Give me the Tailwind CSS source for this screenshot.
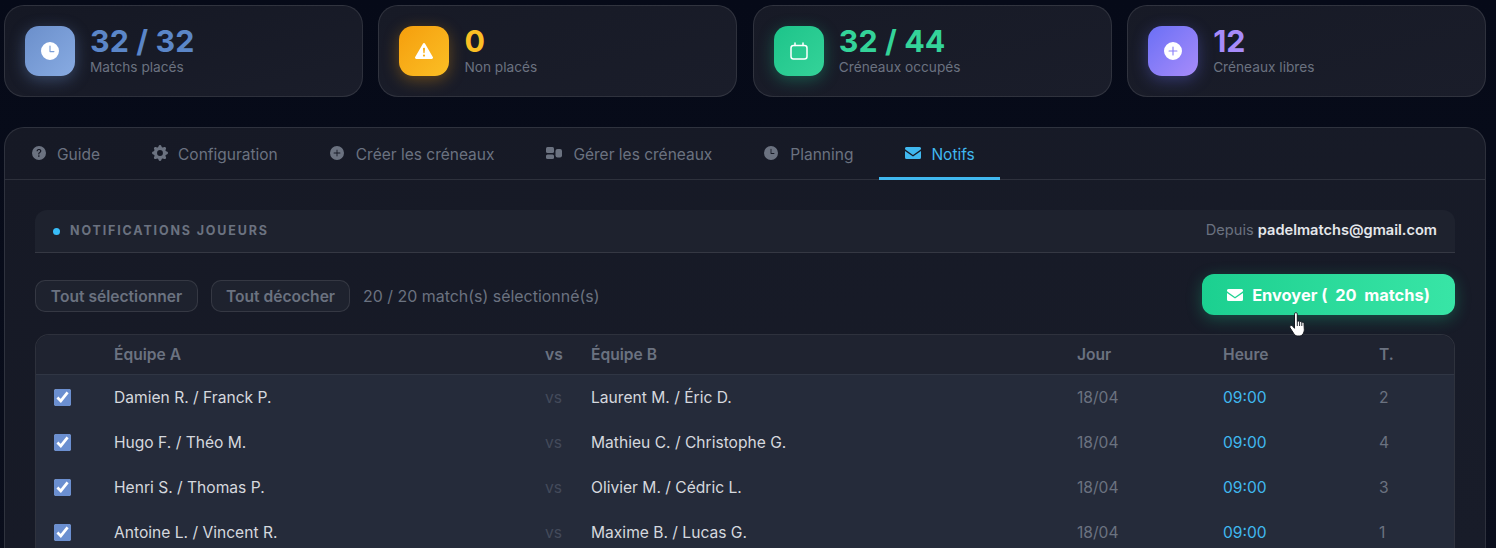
<!DOCTYPE html>
<html lang="fr">
<head>
  <meta charset="UTF-8" />
  <title>Notifications joueurs</title>
  <script src="https://cdn.jsdelivr.net/npm/@tailwindcss/browser@4"></script>
</head>
<body class="h-[548px] overflow-hidden bg-gradient-to-b from-[#060a18] to-[#0a0e1c] font-['Inter',sans-serif] text-[#d5d8de]">
  <div class="pl-[4px] pr-[10px] pt-[5px]">

    <!-- Stats -->
    <div class="grid grid-cols-4 gap-[15.5px]">
      <div class="flex h-[92px] items-center gap-[15px] rounded-[20px] border border-white/10 bg-gradient-to-br from-[#151824] to-[#1a1d2a] px-[20px]">
        <div class="flex h-[50px] w-[50px] items-center justify-center rounded-[14px] bg-gradient-to-br from-[#6b8fcb] to-[#88abe2] shadow-[0_4px_16px_rgba(107,143,203,0.4)]">
          <svg class="h-[18px] w-[18px]" viewBox="0 0 16 16" fill="#fff"><path fill-rule="evenodd" d="M16 8A8 8 0 1 1 0 8a8 8 0 0 1 16 0M8.500 3.500a.5.5 0 0 0-1 0V8.500a.5.5 0 0 0 .5.5h3.500a.5.5 0 0 0 0-1H8.500z"/></svg>
        </div>
        <div class="mt-[-2px]">
          <div class="text-[30.4px] leading-[33px] font-bold tracking-[0.1px] text-[#5b86c8]">32 / 32</div>
          <div class="text-[13.7px] leading-[18px] text-[#6b7280]">Matchs placés</div>
        </div>
      </div>
      <div class="flex h-[92px] items-center gap-[15px] rounded-[20px] border border-white/10 bg-gradient-to-br from-[#171a26] to-[#1a1d2a] px-[20px]">
        <div class="flex h-[50px] w-[50px] items-center justify-center rounded-[14px] bg-gradient-to-br from-[#f59e0b] to-[#fbbf24] shadow-[0_4px_16px_rgba(245,158,11,0.35)]">
          <svg class="h-[18px] w-[18px]" viewBox="0 0 16 16" fill="#fff"><path d="M8.982 1.566a1.13 1.13 0 0 0-1.96 0L.165 13.233c-.457.778.091 1.767.98 1.767h13.713c.889 0 1.438-.99.98-1.767zM8 5c.535 0 .954.462.9.995l-.35 3.507a.552.552 0 0 1-1.1 0L7.100 5.995A.905.905 0 0 1 8 5m.002 6a1 1 0 1 1 0 2 1 1 0 0 1 0-2"/></svg>
        </div>
        <div class="mt-[-2px]">
          <div class="text-[30.4px] leading-[33px] font-bold tracking-[0.1px] text-[#fbbf24]">0</div>
          <div class="text-[13.7px] leading-[18px] text-[#6b7280]">Non placés</div>
        </div>
      </div>
      <div class="flex h-[92px] items-center gap-[15px] rounded-[20px] border border-white/10 bg-gradient-to-br from-[#171a26] to-[#1a1d2a] px-[20px]">
        <div class="flex h-[50px] w-[50px] items-center justify-center rounded-[14px] bg-gradient-to-br from-[#1cc48a] to-[#34d399] shadow-[0_4px_16px_rgba(28,196,138,0.35)]">
          <svg class="h-[18px] w-[18px]" viewBox="0 0 18 18" fill="none" stroke="#fff" stroke-width="1.500" stroke-linecap="round"><rect x="1" y="3.500" width="16" height="13.500" rx="2.500"/><path d="M5 1v2.500M13 1v2.500"/></svg>
        </div>
        <div class="mt-[-2px]">
          <div class="text-[30.4px] leading-[33px] font-bold tracking-[0.1px] text-[#34d399]">32 / 44</div>
          <div class="text-[13.7px] leading-[18px] text-[#6b7280]">Créneaux occupés</div>
        </div>
      </div>
      <div class="flex h-[92px] items-center gap-[15px] rounded-[20px] border border-white/10 bg-gradient-to-br from-[#171a26] to-[#1a1d2a] px-[20px]">
        <div class="flex h-[50px] w-[50px] items-center justify-center rounded-[14px] bg-gradient-to-br from-[#6b6ff5] to-[#a78bfa] shadow-[0_4px_16px_rgba(107,111,245,0.35)]">
          <svg class="h-[18px] w-[18px]" viewBox="0 0 16 16" fill="#fff"><path fill-rule="evenodd" d="M16 8A8 8 0 1 1 0 8a8 8 0 0 1 16 0M8.500 4.500a.5.5 0 0 0-1 0v3h-3a.5.5 0 0 0 0 1h3v3a.5.5 0 0 0 1 0v-3h3a.5.5 0 0 0 0-1h-3z"/></svg>
        </div>
        <div class="mt-[-2px]">
          <div class="text-[30.4px] leading-[33px] font-bold tracking-[0.1px] text-[#a78bfa]">12</div>
          <div class="text-[13.7px] leading-[18px] text-[#6b7280]">Créneaux libres</div>
        </div>
      </div>
    </div>

    <!-- Main panel -->
    <div class="mt-[30px] rounded-t-[20px] border border-white/10 bg-gradient-to-br from-[#161925] to-[#181c29]">

      <!-- Tabs -->
      <div class="flex h-[52px] border-b border-white/10 pl-[1px] pt-[2px] text-[15.5px] text-[#6b7280]">
        <div class="flex items-center gap-[11px] px-[26px]">
          <svg class="mt-[-4px] h-[14px] w-[14px]" viewBox="0 0 16 16" fill="currentColor"><path d="M16 8A8 8 0 1 1 0 8a8 8 0 0 1 16 0M5.496 6.033h.825c.138 0 .248-.113.266-.25.09-.656.54-1.134 1.342-1.134.686 0 1.314.343 1.314 1.168 0 .635-.374.927-.965 1.371-.673.489-1.206 1.06-1.168 1.987l.003.217a.25.25 0 0 0 .25.246h.811a.25.25 0 0 0 .25-.25v-.105c0-.718.273-.927 1.01-1.486.609-.463 1.244-.977 1.244-2.056 0-1.511-1.276-2.241-2.673-2.241-1.267 0-2.655.59-2.75 2.286a.237.237 0 0 0 .241.247m2.325 6.443c.61 0 1.029-.394 1.029-.927 0-.552-.42-.94-1.029-.94-.584 0-1.009.388-1.009.94 0 .533.425.927 1.01.927z"/></svg>
          Guide
        </div>
        <div class="flex items-center gap-[10px] px-[26px]">
          <svg class="mt-[-4px] h-[16px] w-[16px]" viewBox="0 0 16 16" fill="currentColor"><path d="M9.405 1.050c-.413-1.400-2.397-1.400-2.810 0l-.1.340a1.464 1.464 0 0 1-2.105.872l-.31-.17c-1.283-.698-2.686.705-1.987 1.987l.169.311c.446.82.023 1.841-.872 2.105l-.34.1c-1.400.413-1.400 2.397 0 2.810l.34.1a1.464 1.464 0 0 1 .872 2.105l-.17.31c-.698 1.283.705 2.686 1.987 1.987l.311-.169a1.464 1.464 0 0 1 2.105.872l.1.34c.413 1.400 2.397 1.400 2.810 0l.1-.34a1.464 1.464 0 0 1 2.105-.872l.31.17c1.283.698 2.686-.705 1.987-1.987l-.169-.311a1.464 1.464 0 0 1 .872-2.105l.34-.1c1.400-.413 1.400-2.397 0-2.810l-.34-.1a1.464 1.464 0 0 1-.872-2.105l.17-.31c.698-1.283-.705-2.686-1.987-1.987l-.311.169a1.464 1.464 0 0 1-2.105-.872zM8 10.930a2.929 2.929 0 1 1 0-5.860 2.929 2.929 0 0 1 0 5.858z"/></svg>
          Configuration
        </div>
        <div class="flex items-center gap-[12px] px-[26px]">
          <svg class="mt-[-4px] h-[14px] w-[14px]" viewBox="0 0 16 16" fill="currentColor"><path fill-rule="evenodd" d="M16 8A8 8 0 1 1 0 8a8 8 0 0 1 16 0M8.500 4.500a.5.5 0 0 0-1 0v3h-3a.5.5 0 0 0 0 1h3v3a.5.5 0 0 0 1 0v-3h3a.5.5 0 0 0 0-1h-3z"/></svg>
          Créer les créneaux
        </div>
        <div class="flex items-center gap-[11px] px-[26px]">
          <svg class="mt-[-4px] h-[14px] w-[16px]" viewBox="0 0 16 14" fill="currentColor"><rect x="0" y="1" width="8" height="6" rx="1.500"/><rect x="0" y="8.500" width="8" height="4.500" rx="1.500"/><rect x="9.500" y="3" width="6.500" height="8.500" rx="2"/></svg>
          Gérer les créneaux
        </div>
        <div class="flex items-center gap-[12px] px-[26px]">
          <svg class="mt-[-4px] h-[14px] w-[14px]" viewBox="0 0 16 16" fill="currentColor"><path fill-rule="evenodd" d="M16 8A8 8 0 1 1 0 8a8 8 0 0 1 16 0M8.500 3.500a.5.5 0 0 0-1 0V8.500a.5.5 0 0 0 .5.5h3.500a.5.5 0 0 0 0-1H8.500z"/></svg>
          Planning
        </div>
        <div class="relative flex items-center gap-[10px] pl-[26px] pr-[25px] text-[#40b8ef]">
          <svg class="mt-[-4px] h-[12px] w-[16px]" viewBox="0 0 16 12" fill="currentColor"><path d="M1.500 0h13a1.500 1.500 0 0 1 .9 2.700L8 8 .6 2.700A1.500 1.500 0 0 1 1.500 0M0 4v6.500A1.500 1.500 0 0 0 1.500 12h13a1.500 1.500 0 0 0 1.500-1.500V4L8 9.600z"/></svg>
          Notifs
          <span class="absolute inset-x-0 bottom-[-1px] h-[3px] bg-[#40b8ef]"></span>
        </div>
      </div>

      <!-- Content -->
      <div class="px-[30px] pt-[30px]">
        <div class="flex h-[43px] items-center justify-between rounded-t-[12px] border-b border-white/10 bg-[#1e222e] px-[18px]">
          <div class="flex items-center gap-[10px]">
            <span class="h-[7px] w-[7px] rounded-full bg-[#38bdf8]"></span>
            <span class="pt-[1px] text-[12.5px] font-bold tracking-[1.85px] text-[#6b7280]">NOTIFICATIONS JOUEURS</span>
          </div>
          <div class="text-[14.6px] text-[#6b7280]">Depuis <span class="font-semibold text-[#e5e7eb]">padelmatchs@gmail.com</span></div>
        </div>

        <div class="flex h-[81px] items-start justify-between pt-[21px]">
          <div class="mt-[6px] flex items-center">
            <button class="h-[32px] w-[163px] rounded-[10px] border border-white/10 bg-[#1e222e] pt-[2px] text-[15.6px] font-semibold text-[#6b7280]">Tout sélectionner</button>
            <button class="ml-[13px] h-[32px] w-[139px] rounded-[10px] border border-white/10 bg-[#1e222e] pt-[2px] text-[15.6px] font-semibold text-[#6b7280]">Tout décocher</button>
            <span class="ml-[13px] pt-[1px] text-[15.95px] text-[#6b7280]">20 / 20 match(s) sélectionné(s)</span>
          </div>
          <div class="relative">
            <button class="flex h-[41px] w-[253px] items-center justify-center gap-[9px] rounded-[12px] bg-gradient-to-r from-[#1bd090] to-[#38e5a6] text-[16.4px] font-bold text-white shadow-[0_4px_16px_rgba(28,208,144,0.3)]">
              <svg class="h-[12px] w-[16px]" viewBox="0 0 16 12" fill="currentColor"><path d="M1.500 0h13a1.500 1.500 0 0 1 .9 2.700L8 8 .6 2.700A1.500 1.500 0 0 1 1.500 0M0 4v6.500A1.500 1.500 0 0 0 1.500 12h13a1.500 1.500 0 0 0 1.500-1.500V4L8 9.600z"/></svg>
              <span class="whitespace-pre pt-[2px]">Envoyer (  20  matchs)</span>
            </button>
            <!-- mouse pointer -->
            <svg class="absolute left-[87px] top-[38px] h-[25px] w-[18px]" viewBox="0 0 18 25"><path d="M5.500 2.200C5.500 1.200 6.100.700 6.900.700S8.300 1.200 8.300 2.200V9.500c.7-.7 1.900-.6 2.300.3.700-.6 1.900-.4 2.200.6.800-.5 2-.1 2.200.9l.3 6.200c0 3.500-2 6.500-5 6.500H8.700c-1.700 0-2.900-.9-3.800-2.200L1.200 16c-.7-1-.4-2 .4-2.400.8-.4 1.700 0 2.300.8l1.600 1.900z" fill="#fff" stroke="#141820" stroke-width="1"/><path d="M8.300 9.500v4.500M10.600 9.800v4.200M12.800 10.400v3.600" stroke="#141820" stroke-width="0.900"/></svg>
          </div>
        </div>

        <!-- Table -->
        <div class="overflow-hidden rounded-t-[14px] border border-b-0 border-white/10">
          <table class="w-full table-fixed border-collapse text-left text-[15.6px]">
            <colgroup>
              <col class="w-[60px]" />
              <col class="w-[431px]" />
              <col class="w-[46px]" />
              <col class="w-[486px]" />
              <col class="w-[146px]" />
              <col class="w-[156px]" />
              <col />
            </colgroup>
            <thead class="bg-[#1f2330] text-[#6b7280]">
              <tr class="h-[39px] border-b border-white/5">
                <th class="px-[18px] font-semibold"></th>
                <th class="px-[18px] font-semibold">Équipe A</th>
                <th class="px-[18px] font-semibold">vs</th>
                <th class="px-[18px] font-semibold">Équipe B</th>
                <th class="px-[18px] font-semibold">Jour</th>
                <th class="px-[18px] font-semibold">Heure</th>
                <th class="px-[18px] font-semibold">T.</th>
              </tr>
            </thead>
            <tbody class="bg-[#252b3a]">
              <tr class="h-[46px]">
                <td class="px-[18px]"><input type="checkbox" checked class="block h-[17px] w-[17px] accent-[#6b8fd0]" /></td>
                <td class="px-[18px]">Damien R. / Franck P.</td>
                <td class="px-[18px] text-[#434a5a]">vs</td>
                <td class="px-[18px]">Laurent M. / Éric D.</td>
                <td class="px-[18px] text-[#6b7280]">18/04</td>
                <td class="px-[18px] text-[#40b8ef]">09:00</td>
                <td class="px-[18px] text-[#6b7280]">2</td>
              </tr>
              <tr class="h-[45px]">
                <td class="px-[18px]"><input type="checkbox" checked class="block h-[17px] w-[17px] accent-[#6b8fd0]" /></td>
                <td class="px-[18px]">Hugo F. / Théo M.</td>
                <td class="px-[18px] text-[#434a5a]">vs</td>
                <td class="px-[18px]">Mathieu C. / Christophe G.</td>
                <td class="px-[18px] text-[#6b7280]">18/04</td>
                <td class="px-[18px] text-[#40b8ef]">09:00</td>
                <td class="px-[18px] text-[#6b7280]">4</td>
              </tr>
              <tr class="h-[45px]">
                <td class="px-[18px]"><input type="checkbox" checked class="block h-[17px] w-[17px] accent-[#6b8fd0]" /></td>
                <td class="px-[18px]">Henri S. / Thomas P.</td>
                <td class="px-[18px] text-[#434a5a]">vs</td>
                <td class="px-[18px]">Olivier M. / Cédric L.</td>
                <td class="px-[18px] text-[#6b7280]">18/04</td>
                <td class="px-[18px] text-[#40b8ef]">09:00</td>
                <td class="px-[18px] text-[#6b7280]">3</td>
              </tr>
              <tr class="h-[45px]">
                <td class="px-[18px]"><input type="checkbox" checked class="block h-[17px] w-[17px] accent-[#6b8fd0]" /></td>
                <td class="px-[18px]">Antoine L. / Vincent R.</td>
                <td class="px-[18px] text-[#434a5a]">vs</td>
                <td class="px-[18px]">Maxime B. / Lucas G.</td>
                <td class="px-[18px] text-[#6b7280]">18/04</td>
                <td class="px-[18px] text-[#40b8ef]">09:00</td>
                <td class="px-[18px] text-[#6b7280]">1</td>
              </tr>
            </tbody>
          </table>
        </div>
      </div>
    </div>
  </div>
</body>
</html>
